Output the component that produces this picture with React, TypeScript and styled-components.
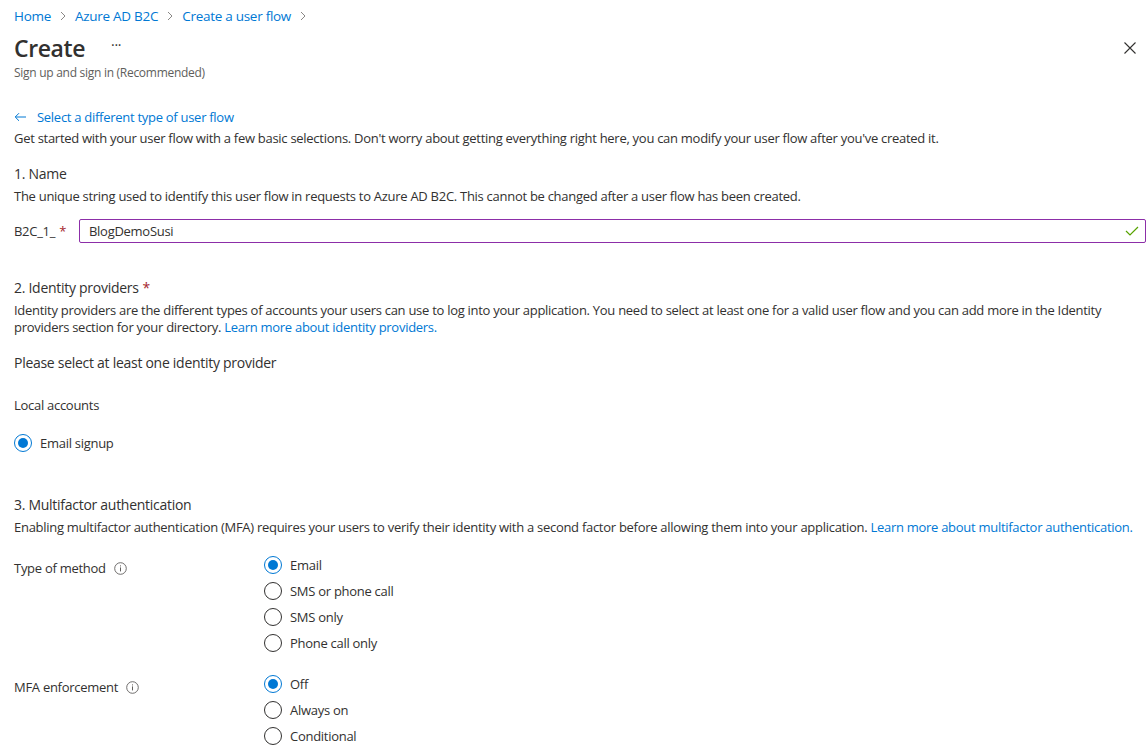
import React from 'react';
import styled, { createGlobalStyle } from 'styled-components';

const GlobalStyle = createGlobalStyle`
    html, body {
        margin: 0;
        padding: 0;
        background: #ffffff;
    }
    body {
        font-family: "Segoe UI", "Open Sans", "Noto Sans", sans-serif;
        color: #323130;
        font-size: 13px;
        letter-spacing: -0.28px;
    }
`;

const Page = styled.div`
    padding: 0 0 0 14px;
    width: 1146px;
    box-sizing: border-box;
`;

const Breadcrumb = styled.nav`
    display: flex;
    align-items: center;
    height: 20px;
    padding-top: 6px;
    gap: 8px;
`;

const Crumb = styled.a`
    color: #0078d4;
    font-size: 13.5px;
    text-decoration: none;
`;

const Chevron = styled.span`
    display: inline-flex;
`;

const Header = styled.div`
    display: flex;
    align-items: flex-start;
    justify-content: space-between;
    padding-right: 10px;
    margin-top: 7px;
`;

const TitleRow = styled.div`
    display: flex;
    align-items: center;
    gap: 26px;
`;

const Title = styled.h1`
    margin: 0;
    font-size: 23px;
    font-weight: 600;
    line-height: 30px;
    color: #323130;
    letter-spacing: -0.4px;
`;

const More = styled.span`
    font-size: 14px;
    color: #323130;
    margin-top: -8px;
`;

const Subtitle = styled.div`
    font-size: 12px;
    color: #605e5c;
    margin-top: 1px;
`;

const Close = styled.button`
    border: none;
    background: none;
    padding: 0;
    margin-top: 9px;
    display: inline-flex;
`;

const BackLink = styled.a`
    display: flex;
    align-items: center;
    gap: 10px;
    color: #0078d4;
    margin-top: 27px;
    text-decoration: none;
    font-size: 13px;
`;

const Text = styled.p<{ $top?: number }>`
    margin: ${p => p.$top ?? 0}px 0 0;
    font-size: 13px;
    line-height: 17px;
    color: #323130;
`;

const Link = styled.a`
    color: #0078d4;
    text-decoration: none;
`;

const SectionTitle = styled.h2<{ $top: number }>`
    margin: ${p => p.$top}px 0 0;
    font-size: 14px;
    font-weight: 400;
    line-height: 20px;
    color: #323130;
`;

const Required = styled.span`
    color: #a4262c;
    margin-left: 4px;
`;

const NameRow = styled.div`
    display: flex;
    align-items: center;
    margin-top: 14px;
`;

const Prefix = styled.label`
    width: 65px;
    flex-shrink: 0;
    font-size: 13px;
`;

const InputWrap = styled.div`
    flex: 1;
    height: 24px;
    border: 1px solid #8c2ea8;
    border-radius: 2px;
    display: flex;
    align-items: center;
    justify-content: space-between;
    padding: 0 6px 0 9px;
    box-sizing: border-box;
`;

const InputText = styled.span`
    font-size: 13px;
    color: #323130;
`;

const Plain = styled.div<{ $top: number; $size?: number }>`
    margin-top: ${p => p.$top}px;
    font-size: ${p => p.$size ?? 13}px;
    line-height: 20px;
`;

const RadioGroup = styled.div<{ $top: number }>`
    margin-top: ${p => p.$top}px;
`;

const RadioRow = styled.label`
    display: flex;
    align-items: center;
    gap: 8px;
    height: 26px;
    font-size: 13px;
`;

const Circle = styled.span<{ $on?: boolean }>`
    width: 18px;
    height: 18px;
    box-sizing: border-box;
    border-radius: 50%;
    border: 1px solid ${p => (p.$on ? '#0078d4' : '#323130')};
    display: inline-flex;
    align-items: center;
    justify-content: center;
    &::after {
        content: '';
        width: 10px;
        height: 10px;
        border-radius: 50%;
        background: ${p => (p.$on ? '#0078d4' : 'transparent')};
    }
`;

const FieldRow = styled.div<{ $top: number }>`
    display: grid;
    grid-template-columns: 250px 1fr;
    margin-top: ${p => p.$top}px;
`;

const FieldLabel = styled.div`
    display: flex;
    align-items: center;
    gap: 8px;
    height: 26px;
    font-size: 13px;
    margin-top: 3px;
`;

const RadioList = styled.div`
    display: flex;
    flex-direction: column;
`;

const InfoIcon = () => (
    <svg width="13" height="13" viewBox="0 0 13 13">
        <circle cx="6.5" cy="6.5" r="5.8" fill="none" stroke="#605e5c" strokeWidth="0.9" />
        <rect x="6" y="5.4" width="1" height="4" fill="#605e5c" />
        <rect x="6" y="3.4" width="1" height="1" fill="#605e5c" />
    </svg>
);

const ChevronIcon = () => (
    <svg width="8" height="10" viewBox="0 0 8 10">
        <path d="M2 1l4 4-4 4" fill="none" stroke="#8a8886" strokeWidth="1" />
    </svg>
);

const Radio: React.FC<{ on?: boolean; label: string }> = ({ on, label }) => (
    <RadioRow>
        <Circle $on={on} />
        {label}
    </RadioRow>
);

const App: React.FC = () => (
    <>
        <GlobalStyle />
        <Page>
            <Breadcrumb>
                <Crumb>Home</Crumb>
                <Chevron><ChevronIcon /></Chevron>
                <Crumb>Azure AD B2C</Crumb>
                <Chevron><ChevronIcon /></Chevron>
                <Crumb>Create a user flow</Crumb>
                <Chevron><ChevronIcon /></Chevron>
            </Breadcrumb>

            <Header>
                <div>
                    <TitleRow>
                        <Title>Create</Title>
                        <More>···</More>
                    </TitleRow>
                    <Subtitle>Sign up and sign in (Recommended)</Subtitle>
                </div>
                <Close aria-label="Close">
                    <svg width="12" height="12" viewBox="0 0 12 12">
                        <path d="M0.5 0.5l11 11M11.5 0.5l-11 11" stroke="#323130" strokeWidth="1.1" />
                    </svg>
                </Close>
            </Header>

            <BackLink>
                <svg width="13" height="10" viewBox="0 0 13 10">
                    <path d="M12 5H1.5M5 1.2L1.2 5 5 8.8" fill="none" stroke="#0078d4" strokeWidth="1" />
                </svg>
                Select a different type of user flow
            </BackLink>
            <Text $top={4}>
                Get started with your user flow with a few basic selections. Don't worry about getting everything right here, you can modify your user flow after you've created it.
            </Text>

            <SectionTitle $top={17}>1. Name</SectionTitle>
            <Text $top={4}>
                The unique string used to identify this user flow in requests to Azure AD B2C. This cannot be changed after a user flow has been created.
            </Text>
            <NameRow>
                <Prefix>B2C_1_<Required>*</Required></Prefix>
                <InputWrap>
                    <InputText>BlogDemoSusi</InputText>
                    <svg width="14" height="10" viewBox="0 0 14 10">
                        <path d="M1 5l4 4 8-8" fill="none" stroke="#57a300" strokeWidth="1.2" />
                    </svg>
                </InputWrap>
            </NameRow>

            <SectionTitle $top={35}>2. Identity providers<Required>*</Required></SectionTitle>
            <Text $top={4}>
                Identity providers are the different types of accounts your users can use to log into your application. You need to select at least one for a valid user flow and you can add more in the Identity providers section for your directory. <Link>Learn more about identity providers.</Link>
            </Text>
            <Plain $top={17} $size={14}>Please select at least one identity provider</Plain>
            <Plain $top={22}>Local accounts</Plain>
            <RadioGroup $top={15}>
                <Radio on label="Email signup" />
            </RadioGroup>

            <SectionTitle $top={39}>3. Multifactor authentication</SectionTitle>
            <Text $top={4}>
                Enabling multifactor authentication (MFA) requires your users to verify their identity with a second factor before allowing them into your application. <Link>Learn more about multifactor authentication.</Link>
            </Text>

            <FieldRow $top={16}>
                <FieldLabel>Type of method <InfoIcon /></FieldLabel>
                <RadioList>
                    <Radio on label="Email" />
                    <Radio label="SMS or phone call" />
                    <Radio label="SMS only" />
                    <Radio label="Phone call only" />
                </RadioList>
            </FieldRow>

            <FieldRow $top={15}>
                <FieldLabel>MFA enforcement <InfoIcon /></FieldLabel>
                <RadioList>
                    <Radio on label="Off" />
                    <Radio label="Always on" />
                    <Radio label="Conditional" />
                </RadioList>
            </FieldRow>
        </Page>
    </>
);

export default App;
